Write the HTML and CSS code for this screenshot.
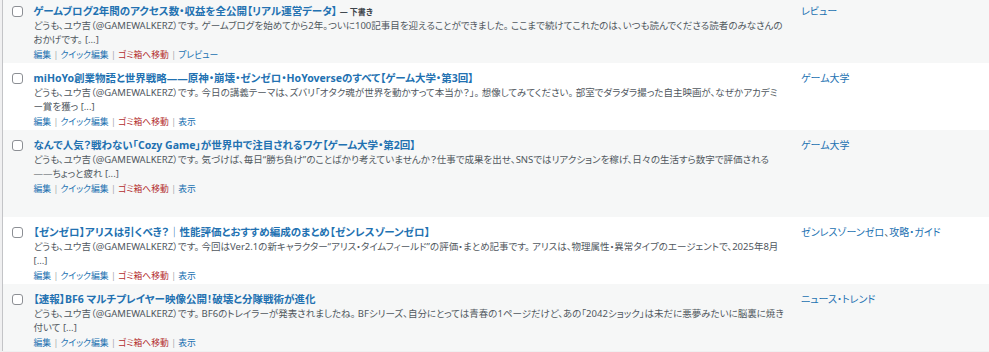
FILE: index.html
```html
<!DOCTYPE html>
<html lang="ja">
<head>
<meta charset="UTF-8" />
<meta name="viewport" content="width=device-width, initial-scale=1" />
<title>投稿一覧</title>
<link rel="stylesheet" href="styles.css">
</head>
<body>

<div class="list-wrap">
  <table class="posts">
    <colgroup>
      <col class="col-cb">
      <col class="col-title">
      <col class="col-cat">
    </colgroup>
    <tbody>

      <!-- 下書き -->
      <tr class="alt">
        <td class="check"><input type="checkbox" /></td>
        <td class="title">
          <strong><a class="row-title" href="#">ゲームブログ2年間のアクセス数・収益を全公開【リアル運営データ】</a> <span class="post-state">— 下書き</span></strong>
          <p class="excerpt">どうも、ユウ吉（@GAMEWALKERZ）です。 ゲームブログを始めてから2年。ついに100記事目を迎えることができました。 ここまで続けてこれたのは、いつも読んでくださる読者のみなさんのおかげです。 [...]</p>
          <div class="row-actions">
            <a href="#">編集</a> | <a href="#">クイック編集</a> | <a class="trash" href="#">ゴミ箱へ移動</a> | <a href="#">プレビュー</a>
          </div>
        </td>
        <td class="cats"><a href="#">レビュー</a></td>
      </tr>

      <tr>
        <td class="check"><input type="checkbox" /></td>
        <td class="title">
          <strong><a class="row-title" href="#">miHoYo創業物語と世界戦略——原神・崩壊・ゼンゼロ・HoYoverseのすべて【ゲーム大学・第3回】</a></strong>
          <p class="excerpt">どうも、ユウ吉（@GAMEWALKERZ）です。 今日の講義テーマは、ズバリ「オタク魂が世界を動かすって本当か？」。 想像してみてください。 部室でダラダラ撮った自主映画が、なぜかアカデミー賞を獲っ [...]</p>
          <div class="row-actions">
            <a href="#">編集</a> | <a href="#">クイック編集</a> | <a class="trash" href="#">ゴミ箱へ移動</a> | <a href="#">表示</a>
          </div>
        </td>
        <td class="cats"><a href="#">ゲーム大学</a></td>
      </tr>

      <tr class="alt tall">
        <td class="check"><input type="checkbox" /></td>
        <td class="title">
          <strong><a class="row-title" href="#">なんで人気？戦わない「Cozy Game」が世界中で注目されるワケ【ゲーム大学・第2回】</a></strong>
          <p class="excerpt">どうも、ユウ吉（@GAMEWALKERZ）です。 気づけば、毎日“勝ち負け”のことばかり考えていませんか？仕事で成果を出せ、SNSではリアクションを稼げ、日々の生活すら数字で評価される——ちょっと疲れ [...]</p>
          <div class="row-actions">
            <a href="#">編集</a> | <a href="#">クイック編集</a> | <a class="trash" href="#">ゴミ箱へ移動</a> | <a href="#">表示</a>
          </div>
        </td>
        <td class="cats"><a href="#">ゲーム大学</a></td>
      </tr>

      <tr>
        <td class="check"><input type="checkbox" /></td>
        <td class="title">
          <strong><a class="row-title" href="#">【ゼンゼロ】アリスは引くべき？｜性能評価とおすすめ編成のまとめ【ゼンレスゾーンゼロ】</a></strong>
          <p class="excerpt">どうも、ユウ吉（@GAMEWALKERZ）です。 今回はVer2.1の新キャラクター“アリス・タイムフィールド”の評価・まとめ記事です。 アリスは、物理属性・異常タイプのエージェントで、2025年8月 [...]</p>
          <div class="row-actions">
            <a href="#">編集</a> | <a href="#">クイック編集</a> | <a class="trash" href="#">ゴミ箱へ移動</a> | <a href="#">表示</a>
          </div>
        </td>
        <td class="cats"><a href="#">ゼンレスゾーンゼロ</a>、<a href="#">攻略・ガイド</a></td>
      </tr>

      <tr class="alt">
        <td class="check"><input type="checkbox" /></td>
        <td class="title">
          <strong><a class="row-title" href="#">【速報】BF6 マルチプレイヤー映像公開！破壊と分隊戦術が進化</a></strong>
          <p class="excerpt">どうも、ユウ吉（@GAMEWALKERZ）です。 BF6のトレイラーが発表されましたね。 BFシリーズ、自分にとっては青春の1ページだけど、あの「2042ショック」は未だに悪夢みたいに脳裏に焼き付いて [...]</p>
          <div class="row-actions">
            <a href="#">編集</a> | <a href="#">クイック編集</a> | <a class="trash" href="#">ゴミ箱へ移動</a> | <a href="#">表示</a>
          </div>
        </td>
        <td class="cats"><a href="#">ニュース・トレンド</a></td>
      </tr>

    </tbody>
  </table>
</div>

</body>
</html>
```

FILE: styles.css
```css
body {
  margin: 0;
  padding: 0;
  background-color: #f0f0f1;
  font-family: "Noto Sans", "Noto Sans CJK JP", sans-serif;
  font-feature-settings: "palt";
  color: #50575e;
  overflow: hidden;
}

.list-wrap {
  padding-left: 2px;
  margin-top: -4px;
}

.posts {
  width: 100%;
  border-collapse: collapse;
  table-layout: fixed;
  background-color: #fff;
  border-left: 1px solid #c3c4c7;
}

.col-cb {
  width: 24px;
}

.col-cat {
  width: 195px;
}

.posts td {
  vertical-align: top;
  padding: 8px 7px 1px;
  font-size: 10px;
}

.posts tr.alt {
  background-color: #f6f7f7;
}

.posts tr.tall {
  height: 87px;
}

.posts a {
  color: #2271b1;
  text-decoration: none;
}

.check {
  padding-left: 9px !important;
  padding-right: 0 !important;
}

.check input {
  appearance: none;
  display: block;
  width: 11px;
  height: 11px;
  margin: 2px 0 0;
  border: 1px solid #8c8f94;
  border-radius: 3px;
  background-color: #fff;
  box-sizing: border-box;
}

.title strong {
  display: block;
  line-height: 15px;
  font-size: 10.5px;
  font-weight: 700;
}

.post-state {
  color: #3c434a;
  font-size: 8px;
  font-weight: 600;
}

.excerpt {
  margin: 0;
  line-height: 14px;
  font-size: 9.5px;
}

.row-actions {
  padding-top: 1px;
  line-height: 14px;
  font-size: 8.8px;
  color: #a7aaad;
}

.row-actions a.trash {
  color: #b32d2e;
}

.cats {
  line-height: 15px;
  font-size: 9.3px;
}
```
